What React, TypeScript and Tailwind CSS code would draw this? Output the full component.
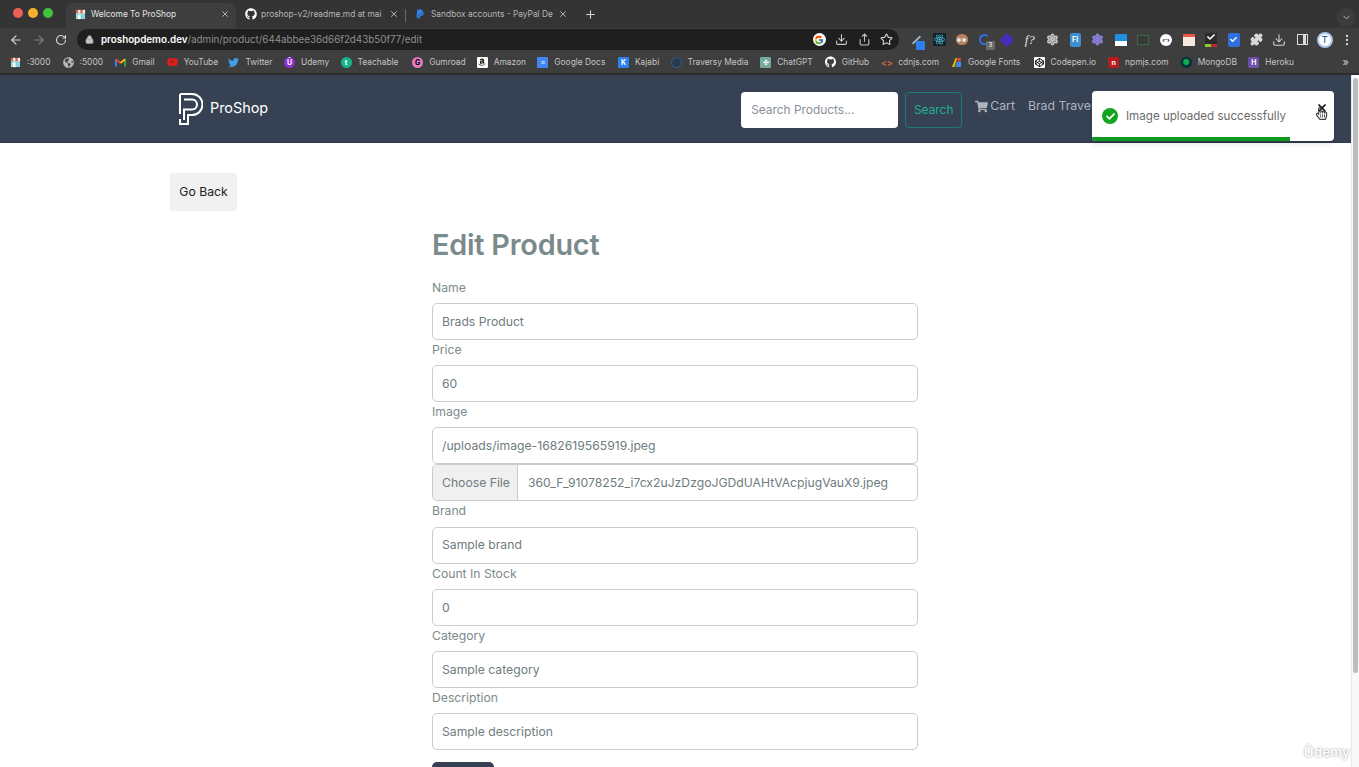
import { ReactNode } from 'react';
import {
  ArrowLeft,
  ArrowRight,
  ChevronDown,
  Download,
  Lock,
  MoreVertical,
  Plus,
  Puzzle,
  RotateCw,
  Settings,
  Share,
  Star,
  X,
} from 'lucide-react';
import {
  FaAmazon,
  FaCheck,
  FaCodepen,
  FaGithub,
  FaGlobeAmericas,
  FaPaypal,
  FaReact,
  FaRegHandPointer,
  FaShoppingCart,
  FaTwitter,
  FaYoutube,
} from 'react-icons/fa';
import { FcGoogle } from 'react-icons/fc';

function ShopFavicon() {
  return (
    <svg viewBox="0 0 12 12" className="h-[11px] w-[11px]">
      <rect x="1" y="1" width="10" height="10" fill="#8fd3d8" />
      <rect x="1" y="1" width="2.5" height="3.5" fill="#e8574a" />
      <rect x="3.5" y="1" width="2.5" height="3.5" fill="#f7f3e6" />
      <rect x="6" y="1" width="2.5" height="3.5" fill="#e8574a" />
      <rect x="8.5" y="1" width="2.5" height="3.5" fill="#f7f3e6" />
      <rect x="3" y="6" width="3" height="5" fill="#fff" />
    </svg>
  );
}

function GmailIcon() {
  return (
    <svg viewBox="0 0 12 10" className="h-[10px] w-[11px]" fill="none" strokeWidth="2">
      <path d="M1 10V2" stroke="#4285f4" />
      <path d="M11 10V2" stroke="#34a853" />
      <path d="M1 2l5 4" stroke="#ea4335" />
      <path d="M11 2L6 6" stroke="#fbbc04" />
    </svg>
  );
}

function GoogleFontsIcon() {
  return (
    <svg viewBox="0 0 12 12" className="h-[11px] w-[11px]">
      <path d="M1 11L5 1h2L3.5 11z" fill="#f4b400" />
      <path d="M6 11V5h5v6z" fill="#4285f4" />
      <circle cx="9" cy="2.8" r="2" fill="#ea4335" />
      <path d="M3.5 11L6 6v5z" fill="#34a853" />
    </svg>
  );
}

function Letter({ bg, dark = false, round = false, children }: { bg: string; dark?: boolean; round?: boolean; children: ReactNode }) {
  return (
    <span
      className={`flex h-[11px] w-[11px] items-center justify-center text-[7px] font-bold leading-none ${round ? 'rounded-full' : 'rounded-[1px]'} ${bg} ${dark ? 'text-black' : 'text-white'}`}
    >
      {children}
    </span>
  );
}

const bookmarks: { label: string; icon: ReactNode; width: string }[] = [
  { label: ':3000', icon: <ShopFavicon />, width: 'w-[24px]' },
  { label: ':5000', icon: <FaGlobeAmericas className="text-[11px] text-[#b9b9b9]" />, width: 'w-[24px]' },
  { label: 'Gmail', icon: <GmailIcon />, width: 'w-[23px]' },
  { label: 'YouTube', icon: <FaYoutube className="text-[12px] text-[#e21b1b]" />, width: 'w-[33px]' },
  { label: 'Twitter', icon: <FaTwitter className="text-[11px] text-[#3f9fe8]" />, width: 'w-[27px]' },
  { label: 'Udemy', icon: <Letter bg="bg-[#8f2ed0]" round>Ū</Letter>, width: 'w-[28px]' },
  { label: 'Teachable', icon: <Letter bg="bg-[#19b48c]" round>t</Letter>, width: 'w-[43px]' },
  { label: 'Gumroad', icon: <Letter bg="bg-[#e779c1]" dark round>G</Letter>, width: 'w-[36px]' },
  { label: 'Amazon', icon: <span className="flex h-[11px] w-[11px] items-center justify-center rounded-[1px] bg-white"><FaAmazon className="text-[8px] text-black" /></span>, width: 'w-[32px]' },
  { label: 'Google Docs', icon: <Letter bg="bg-[#4285f4]">≡</Letter>, width: 'w-[52px]' },
  { label: 'Kajabi', icon: <Letter bg="bg-[#2f80ed]">K</Letter>, width: 'w-[24px]' },
  { label: 'Traversy Media', icon: <span className="h-[11px] w-[11px] rounded-full border border-[#2d5f9e] bg-[#2a3a4c]" />, width: 'w-[61px]' },
  { label: 'ChatGPT', icon: <Letter bg="bg-[#74aa9c]">✣</Letter>, width: 'w-[36px]' },
  { label: 'GitHub', icon: <FaGithub className="text-[12px] text-white" />, width: 'w-[28px]' },
  { label: 'cdnjs.com', icon: <span className="text-[9px] font-bold leading-none text-[#c9643f]">&lt;&gt;</span>, width: 'w-[41px]' },
  { label: 'Google Fonts', icon: <GoogleFontsIcon />, width: 'w-[54px]' },
  { label: 'Codepen.io', icon: <span className="flex h-[11px] w-[11px] items-center justify-center rounded-[1px] bg-white"><FaCodepen className="text-[9px] text-black" /></span>, width: 'w-[46px]' },
  { label: 'npmjs.com', icon: <Letter bg="bg-[#b71c1c]">n</Letter>, width: 'w-[44px]' },
  { label: 'MongoDB', icon: <span className="flex h-[11px] w-[11px] items-center justify-center rounded-full bg-[#06303a] text-[8px] leading-none text-[#13aa52]">●</span>, width: 'w-[39px]' },
  { label: 'Heroku', icon: <Letter bg="bg-[#6c4fa8]">H</Letter>, width: 'w-[28px]' },
];

function Tab({ title, icon, active, width }: { title: string; icon: ReactNode; active?: boolean; width: string }) {
  return (
    <div
      className={`flex h-[25px] items-center pb-[3px] pl-[9px] pr-[6px] ${width} ${active ? 'rounded-t-lg bg-[#3e3e3e] text-[#e6e6e6]' : 'text-[#b5b5b5]'}`}
    >
      <span className="flex w-[16px] shrink-0 items-center">{icon}</span>
      <span className="min-w-0 flex-1 whitespace-nowrap text-[8.4px] leading-none">{title}</span>
      <X className="h-[10px] w-[10px] shrink-0 text-[#c9c9c9]" strokeWidth={2} />
    </div>
  );
}

function ExtensionIcons() {
  const slot = 'flex h-[20px] w-[22.7px] items-center justify-center';
  return (
    <div className="flex items-center">
      <span className={`${slot} relative`}>
        <span className="h-[2px] w-[11px] -rotate-45 bg-[#9fb7c9]" />
        <span className="absolute bottom-[0px] right-[3px] h-[9px] w-[9px] rounded-[1px] bg-[#2f80ed]" />
      </span>
      <span className={slot}>
        <span className="flex h-[13px] w-[13px] items-center justify-center bg-[#14242c]">
          <FaReact className="text-[11px] text-[#61dafb]" />
        </span>
      </span>
      <span className={slot}>
        <span className="flex h-[11px] w-[12px] items-center justify-center gap-[1px] rounded-full bg-[#b9825c]">
          <span className="h-[4px] w-[4px] rounded-full bg-[#dfe6e6]" />
          <span className="h-[4px] w-[4px] rounded-full bg-[#dfe6e6]" />
        </span>
      </span>
      <span className={`${slot} relative`}>
        <span className="h-[11px] w-[11px] rounded-full border-[2.5px] border-[#2f6fe0] border-r-transparent" />
        <span className="absolute bottom-[0px] right-[1px] flex h-[9px] w-[9px] items-center justify-center rounded-[1px] bg-[#6a6a6a] text-[6px] leading-none text-white">3</span>
      </span>
      <span className={slot}>
        <span className="h-[10px] w-[10px] rotate-45 bg-[#4a2bc0]" />
      </span>
      <span className={`${slot} font-['Liberation_Serif',serif] text-[13px] italic leading-none text-[#e0e0e0]`}>f?</span>
      <span className={slot}>
        <Settings className="h-[13px] w-[13px] fill-[#9a9a9a] text-[#d0d0d0]" />
      </span>
      <span className={slot}>
        <span className="flex h-[14px] w-[11px] items-center justify-center rounded-[2px] bg-[#3c8fd0] text-[7px] font-bold leading-none text-white">FI</span>
      </span>
      <span className={slot}>
        <Settings className="h-[13px] w-[13px] fill-[#7c74c8] text-[#8f88d8]" />
      </span>
      <span className={slot}>
        <span className="flex h-[12px] w-[12px] flex-col justify-end bg-[#1f8fe0]">
          <span className="h-[5px] w-full bg-white" />
        </span>
      </span>
      <span className={slot}>
        <span className="h-[10px] w-[12px] border border-[#3c6a48] bg-[#383838]" />
      </span>
      <span className={slot}>
        <span className="flex h-[12px] w-[12px] items-center justify-center rounded-full bg-white text-[6px] font-bold leading-none text-black">‹·›</span>
      </span>
      <span className={slot}>
        <span className="flex h-[12px] w-[12px] flex-col bg-[#f4e9dc]">
          <span className="h-[3px] w-full bg-[#e8574a]" />
        </span>
      </span>
      <span className={slot}>
        <span className="relative flex h-[14px] w-[12px] items-start justify-center bg-[#2b2b2b]">
          <FaCheck className="text-[8px] text-white" />
          <span className="absolute bottom-0 left-0 h-[3px] w-[6px] bg-[#8fc93a]" />
          <span className="absolute bottom-0 right-0 h-[3px] w-[6px] bg-[#c0262d]" />
        </span>
      </span>
      <span className={slot}>
        <span className="flex h-[14px] w-[12px] items-center justify-center rounded-[2px] bg-[#2f6fe0]">
          <FaCheck className="text-[7px] text-white" />
        </span>
      </span>
      <span className={slot}>
        <Puzzle className="h-[13px] w-[13px] fill-[#d8d8d8] text-[#d8d8d8]" />
      </span>
      <span className={slot}>
        <Download className="h-[14px] w-[14px] text-[#d8d8d8]" strokeWidth={1.8} />
      </span>
      <span className={slot}>
        <span className="flex h-[11px] w-[11px] justify-start border-[1.5px] border-[#dcdcdc]">
          <span className="h-full w-[5px] bg-[#3e3e3e]" />
          <span className="h-full w-[3px] bg-[#dcdcdc]" />
        </span>
      </span>
      <span className={slot}>
        <span className="flex h-[16px] w-[16px] items-center justify-center rounded-full border-2 border-[#a8c7ea] bg-white text-[9px] font-medium leading-none text-[#2f5f8f]">T</span>
      </span>
      <span className={slot}>
        <MoreVertical className="h-[14px] w-[14px] text-[#d8d8d8]" />
      </span>
    </div>
  );
}

function BrowserChrome() {
  return (
    <div className="flex h-[75px] shrink-0 flex-col bg-[#3e3e3e]">
      <div className="flex h-[28px] items-end bg-[#343434]">
        <div className="flex h-[25px] w-[66px] items-center gap-[5px] self-start pl-[13px]">
          <span className="h-[10px] w-[10px] rounded-full bg-[#ec5f56]" />
          <span className="h-[10px] w-[10px] rounded-full bg-[#f4b32e]" />
          <span className="h-[10px] w-[10px] rounded-full bg-[#3ec23f]" />
        </div>
        <Tab title="Welcome To ProShop" icon={<ShopFavicon />} active width="w-[170px]" />
        <Tab title="proshop-v2/readme.md at mai" icon={<FaGithub className="text-[12px] text-white" />} width="w-[169px]" />
        <div className="mb-[6px] h-[13px] w-px bg-[#6a6a6a]" />
        <Tab title="Sandbox accounts - PayPal De" icon={<FaPaypal className="text-[10px] text-[#2f80ed]" />} width="w-[168px]" />
        <Plus className="mb-[7px] ml-[10px] h-[13px] w-[13px] text-[#d8d8d8]" />
        <div className="mb-[1px] ml-auto mr-[3px] flex h-[19px] w-[19px] items-center justify-center rounded-full bg-[#3c3c3c]">
          <ChevronDown className="h-[11px] w-[11px] text-[#c4c4c4]" />
        </div>
      </div>

      <div className="flex h-[23px] items-center">
        <div className="flex w-[77px] shrink-0 items-center gap-[9px] pl-[9px]">
          <ArrowLeft className="h-[14px] w-[14px] text-[#d8d8d8]" />
          <ArrowRight className="h-[14px] w-[14px] text-[#7f7f7f]" />
          <RotateCw className="h-[12px] w-[12px] text-[#d8d8d8]" strokeWidth={2.2} />
        </div>
        <div className="flex h-[21px] w-[822px] shrink-0 items-center rounded-full bg-[#1f1f1f] pl-[8px] pr-[6px]">
          <Lock className="h-[9px] w-[9px] fill-[#c4c4c4] text-[#c4c4c4]" />
          <span className="ml-[7px] whitespace-nowrap pt-[1px] text-[9.8px] leading-none text-[#8f8f8f]">
            <span className="font-semibold text-white">proshopdemo.dev</span>/admin/product/644abbee36d66f2d43b50f77/edit
          </span>
          <div className="ml-auto flex items-center gap-[9.5px]">
            <span className="flex h-[13px] w-[13px] items-center justify-center rounded-full bg-white">
              <FcGoogle className="text-[10px]" />
            </span>
            <Download className="h-[13px] w-[13px] text-[#c8c8c8]" />
            <Share className="h-[13px] w-[13px] text-[#c8c8c8]" />
            <Star className="h-[13px] w-[13px] text-[#d8d8d8]" />
          </div>
        </div>
        <div className="ml-[6px]">
          <ExtensionIcons />
        </div>
      </div>

      <div className="flex h-[22px] items-center pl-[10px]">
        <div className="flex items-center gap-[11.6px]">
          {bookmarks.map((b) => (
            <div key={b.label} className="flex items-center gap-[6px]">
              <span className="flex h-[12px] w-[11px] items-center justify-center">{b.icon}</span>
              <span className={`whitespace-nowrap text-[8.4px] leading-none text-[#c4c4c4] ${b.width}`}>{b.label}</span>
            </div>
          ))}
        </div>
        <span className="ml-auto mr-[10px] text-[11px] leading-none text-[#c8c8c8]">»</span>
      </div>
      <div className="h-[2px] bg-[#2c2c2c]" />
    </div>
  );
}

function Logo() {
  return (
    <svg viewBox="0 0 24 32" className="h-[32px] w-[24px]" fill="none" stroke="#fff" strokeWidth="2">
      <path d="M1 1h12a10.5 10.5 0 0 1 0 21H9v9H1v-5" />
      <path d="M1 1v20" />
      <path d="M5 6.5h8a5 5 0 0 1 0 10H5V27" />
    </svg>
  );
}

function Navbar() {
  return (
    <div className="flex h-[68px] shrink-0 items-center border-b border-[#2f3b4c] bg-[#364153] pl-[179px]">
      <Logo />
      <span className="ml-[7px] text-[14.4px] leading-none text-white">ProShop</span>
      <div className="ml-[473px] mt-[2px] flex h-[36px] w-[157px] items-center rounded-[4px] bg-white pl-[10px] text-[11.9px] text-[#8a9099]">
        Search Products...
      </div>
      <div className="ml-[7px] mt-[2px] flex h-[36px] w-[57px] items-center justify-center rounded-[4px] border border-[#1c7c72] text-[11.9px] text-[#1fb096]">
        Search
      </div>
      <FaShoppingCart className="ml-[13px] mt-[-4px] text-[13px] text-[#aeb4bc]" />
      <span className="ml-[2px] mt-[-4px] text-[12.3px] leading-none text-[#aeb4bc]">Cart</span>
      <span className="ml-[13px] mt-[-4px] whitespace-nowrap text-[12.3px] leading-none text-[#aeb4bc]">Brad Traversy</span>
    </div>
  );
}

function Field({ label, value }: { label: string; value: string }) {
  return (
    <div>
      <div className="h-[25.2px] text-[12.2px] leading-[19px] text-[#7b8a8b]">{label}</div>
      <div className="flex h-[37px] items-center rounded-[5px] border border-[#cccccc] bg-white px-[9px] pt-[1px] text-[12.2px] text-[#6f7c7d]">
        {value}
      </div>
    </div>
  );
}

function EditForm() {
  return (
    <div className="ml-[262px] w-[486px]">
      <h1 className="text-[28.8px] font-semibold leading-none tracking-[-0.2px] text-[#7b8a8b]">Edit Product</h1>
      <div className="mt-[18px]">
        <Field label="Name" value="Brads Product" />
        <Field label="Price" value="60" />
        <Field label="Image" value="/uploads/image-1682619565919.jpeg" />
        <div className="flex h-[37px] items-stretch overflow-hidden rounded-[5px] border border-[#cccccc] text-[12.2px] text-[#6f7c7d]">
          <div className="flex w-[85px] items-center border-r border-[#cccccc] bg-[#f0f0f0] pl-[9px]">Choose File</div>
          <div className="flex flex-1 items-center whitespace-nowrap pl-[10px]">360_F_91078252_i7cx2uJzDzgoJGDdUAHtVAcpjugVauX9.jpeg</div>
        </div>
        <Field label="Brand" value="Sample brand" />
        <Field label="Count In Stock" value="0" />
        <Field label="Category" value="Sample category" />
        <Field label="Description" value="Sample description" />
      </div>
      <button className="mt-[12px] h-[38px] w-[62px] rounded-[5px] bg-[#364153] text-[12.2px] text-white">Update</button>
    </div>
  );
}

function Toast() {
  return (
    <div className="absolute left-[1092px] top-[91px] flex h-[50px] w-[242px] items-center overflow-hidden rounded-[4px] bg-white pl-[10px] shadow-md">
      <span className="flex h-[16px] w-[16px] items-center justify-center rounded-full bg-[#12a51f]">
        <FaCheck className="text-[9px] text-white" />
      </span>
      <span className="ml-[8px] pt-[1px] text-[11.6px] leading-none text-[#6b6b6b]">Image uploaded successfully</span>
      <X className="absolute right-[6px] top-[11px] h-[12px] w-[12px] text-[#111]" strokeWidth={3.5} />
      <FaRegHandPointer className="absolute right-[6px] top-[16px] text-[13px] text-[#444]" />
      <div className="absolute bottom-0 left-0 h-[4px] w-[198px] bg-[#0f9a1f]" />
    </div>
  );
}

export default function App() {
  return (
    <div className="relative flex h-[767px] w-[1359px] flex-col overflow-hidden bg-white font-['Inter','Liberation_Sans',sans-serif]">
      <BrowserChrome />
      <div className="flex min-h-0 flex-1">
        <div className="flex min-w-0 flex-1 flex-col">
          <Navbar />
          <main className="min-h-0 flex-1 overflow-hidden">
            <div className="mx-auto w-[1011px] pt-[30px]">
              <div className="flex h-[38px] w-[67px] items-center justify-center rounded-[4px] bg-[#f1f1f1] text-[12.2px] text-[#222]">
                Go Back
              </div>
              <div className="mt-[20px]">
                <EditForm />
              </div>
            </div>
          </main>
        </div>
        <div className="w-[8px] shrink-0 border-l border-[#e8e8e8] bg-[#f8f8f8] pl-[1px] pt-[3px]">
          <div className="h-[595px] w-[5px] rounded-full bg-[#bdbdbd]" />
        </div>
      </div>
      <Toast />
      <span className="absolute bottom-[8px] right-[9px] text-[13.5px] font-semibold leading-none text-white [text-shadow:0_0_2px_#888]">Ûdemy</span>
    </div>
  );
}
